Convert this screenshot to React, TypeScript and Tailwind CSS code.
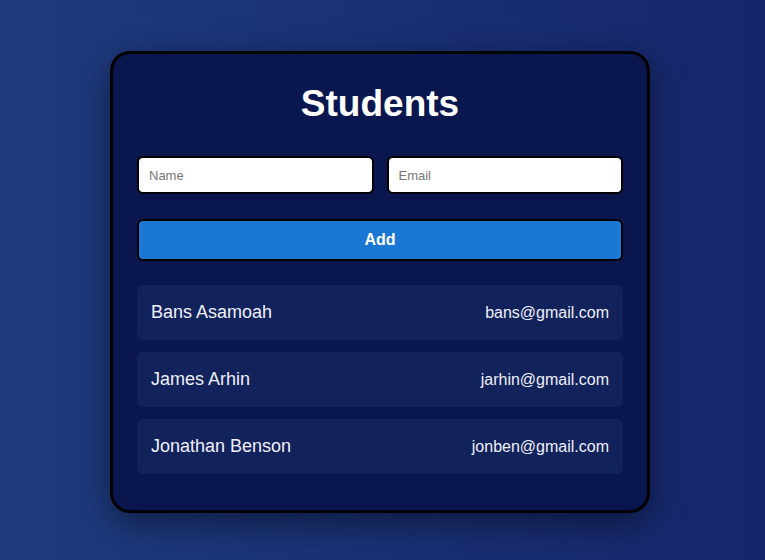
import React, { useState } from 'react';

interface Student {
  name: string;
  email: string;
}

const initialStudents: Student[] = [
  { name: 'Bans Asamoah', email: 'bans@gmail.com' },
  { name: 'James Arhin', email: 'jarhin@gmail.com' },
  { name: 'Jonathan Benson', email: 'jonben@gmail.com' },
];

const App: React.FC = () => {
  const [students, setStudents] = useState<Student[]>(initialStudents);
  const [name, setName] = useState('');
  const [email, setEmail] = useState('');

  const addStudent = () => {
    if (!name.trim() || !email.trim()) return;
    setStudents((prev) => [...prev, { name: name.trim(), email: email.trim() }]);
    setName('');
    setEmail('');
  };

  return (
    <div className="min-h-[560px] w-full bg-gradient-to-r from-[#1f3b7e] to-[#15266a] flex justify-center pr-[5px] pt-[51px] pb-[47px] font-['Liberation_Sans',Arial,sans-serif]">
      <div className="w-[540px] h-fit bg-[#0a174e] border-[3px] border-black rounded-[20px] px-6 pt-[28px] pb-[36px] shadow-[0_10px_35px_rgba(0,0,0,0.45)]">
        <h1 className="text-center text-white font-bold text-[37px] leading-[44px] mb-[30px]">Students</h1>

        <div className="flex gap-[13px]">
          <input
            value={name}
            onChange={(e) => setName(e.target.value)}
            placeholder="Name"
            className="flex-1 min-w-0 h-[38px] bg-white border-2 border-black rounded-[6px] px-[10px] text-[13px] text-black placeholder:text-[#767676] outline-none"
          />
          <input
            value={email}
            onChange={(e) => setEmail(e.target.value)}
            placeholder="Email"
            className="flex-1 min-w-0 h-[38px] bg-white border-2 border-black rounded-[6px] px-[10px] text-[13px] text-black placeholder:text-[#767676] outline-none"
          />
        </div>

        <button
          onClick={addStudent}
          className="mt-[25px] w-full h-[42px] bg-[#1a77d4] border-2 border-black rounded-[6px] text-white font-bold text-[16px]"
        >
          Add
        </button>

        <ul className="mt-[24px] flex flex-col gap-[12px]">
          {students.map((s) => (
            <li
              key={s.email}
              className="h-[55px] bg-[#12225b] rounded-[6px] px-[14px] flex items-center justify-between text-[#eef0fa]"
            >
              <span className="text-[18px]">{s.name}</span>
              <span className="text-[16px]">{s.email}</span>
            </li>
          ))}
        </ul>
      </div>
    </div>
  );
};

export default App;
